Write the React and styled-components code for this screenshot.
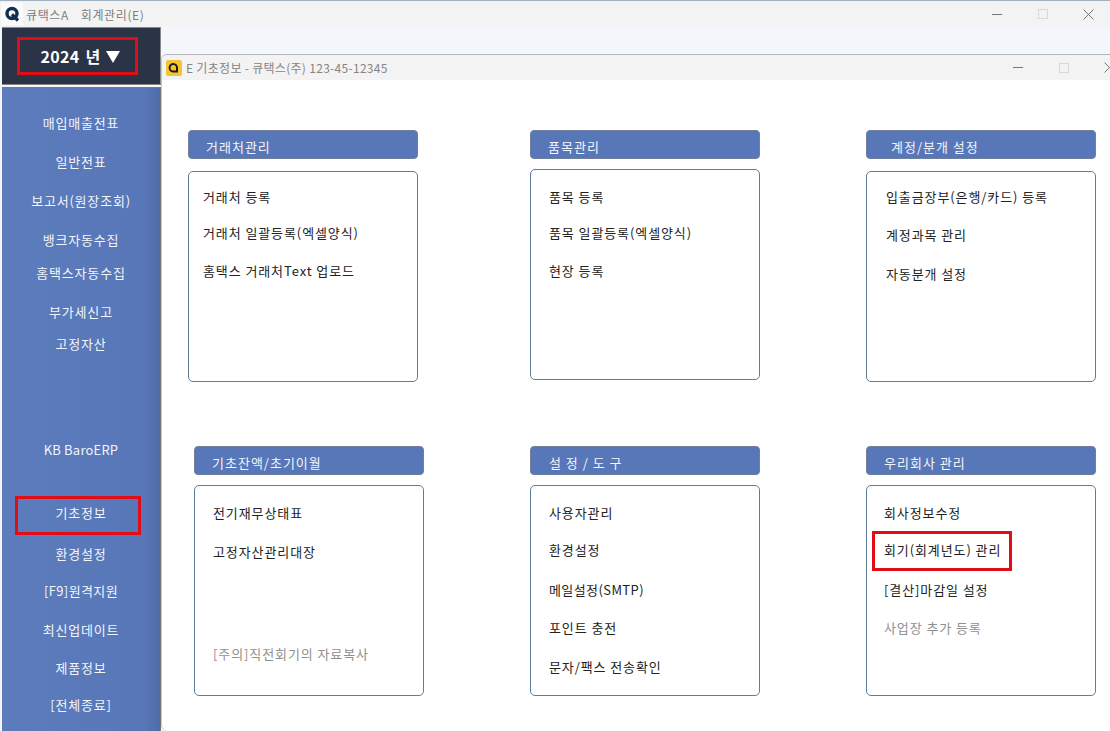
import styled, {createGlobalStyle} from "styled-components";

const GlobalStyle = createGlobalStyle`
    html, body {
        margin: 0;
        padding: 0;
        width: 1110px;
        height: 731px;
        overflow: hidden;
        background: #f3f6fa;
    }
    * {
        box-sizing: border-box;
    }
`;

const Page = styled.div`
    width: 1110px;
    height: 731px;
    overflow: hidden;
    font-family: "Noto Sans CJK KR", "Noto Sans", sans-serif;
    font-size: 13px;
    display: flex;
    flex-direction: column;
`;

const TitleBar = styled.div`
    height: 27px;
    flex: none;
    display: flex;
    align-items: center;
    background: #f3f3f3;
    border-top: 1px solid #9fb0c0;
    color: #7d7d7d;
    font-size: 12px;
    letter-spacing: 0.6px;
`;

const AppLogo = styled.div`
    width: 22px;
    height: 22px;
    margin-left: 1px;
    display: flex;
    align-items: center;
    justify-content: center;
    background: #fbfbfb;
`;

const TitleText = styled.span`
    margin-left: ${({gap}) => gap}px;
    white-space: nowrap;
`;

const WindowButtons = styled.div`
    margin-left: auto;
    display: flex;
    align-items: center;
    gap: ${({gap}) => gap}px;
    margin-right: ${({right}) => right}px;
    color: #777;
`;

const Body = styled.div`
    flex: 1;
    display: flex;
    min-height: 0;
`;

const Sidebar = styled.div`
    width: 161px;
    flex: none;
    display: flex;
    flex-direction: column;
    padding-left: 2px;
    background: #f3f6fa;
`;

const YearBox = styled.div`
    height: 58px;
    flex: none;
    display: flex;
    align-items: center;
    padding-left: 15px;
    background: #2b3347;
    border: 1px solid #888;
    border-left: 0;
`;

const YearLabel = styled.div`
    width: 121px;
    height: 38px;
    display: flex;
    align-items: center;
    justify-content: center;
    gap: 5px;
    border: 3px solid #e00d16;
    color: #fff;
    font-size: 16px;
    font-weight: 700;
    letter-spacing: 0.3px;
    word-spacing: 2px;
    padding-left: 6px;
`;

const Triangle = styled.span`
    width: 0;
    height: 0;
    margin-left: 1px;
    margin-top: 2px;
    border-left: 7px solid transparent;
    border-right: 7px solid transparent;
    border-top: 12px solid #fff;
`;

const Menu = styled.div`
    flex: 1;
    margin-top: 2px;
    display: flex;
    flex-direction: column;
    align-items: center;
    background: linear-gradient(to right, #5c7cbc 0, #5877b8 90%, #4f6ca8 100%);
    border-top: 1px solid #777;
    border-right: 1px solid #777;
`;

const MenuItem = styled.div`
    margin-top: ${({top}) => top}px;
    height: ${({marked}) => (marked ? "39px" : "20px")};
    width: ${({marked}) => (marked ? "126px" : "auto")};
    display: flex;
    align-items: center;
    justify-content: center;
    color: #f2f5fb;
    font-size: 13px;
    letter-spacing: ${({spacing}) => spacing ?? 0.8}px;
    white-space: nowrap;
    border: ${({marked}) => (marked ? "3px solid #e00d16" : "0")};
    padding-bottom: ${({marked}) => (marked ? "6px" : "0")};
    padding-left: ${({marked}) => (marked ? "6px" : "0")};
    margin-left: ${({marked}) => (marked ? "-6px" : "0")};
`;

const ChildWindow = styled.div`
    flex: 1;
    margin-top: 27px;
    display: flex;
    flex-direction: column;
    background: #fff;
    border-top: 1px solid #b5b5b5;
    border-left: 1px solid #c8c8c8;
    border-radius: 6px 0 0 6px;
    min-width: 0;
    overflow: hidden;
`;

const ChildTitle = styled.div`
    height: 25px;
    flex: none;
    display: flex;
    align-items: center;
    background: #f3f3f3;
    color: #858585;
    font-size: 12px;
    letter-spacing: 0.3px;
`;

const ChildLogo = styled.div`
    width: 16px;
    height: 16px;
    margin-left: 4px;
    display: flex;
    align-items: center;
    justify-content: center;
    background: #f5c431;
    border-radius: 2px;
`;

const Panels = styled.div`
    display: grid;
    grid-template-columns: 342px 336px 230px;
    grid-template-rows: 252px 250px;
    padding-top: 50px;
    padding-left: 26px;
    row-gap: 64px;
    justify-content: start;
`;

const Panel = styled.div`
    margin-left: ${({shift}) => shift || 0}px;
    width: 230px;
    display: flex;
    flex-direction: column;
`;

const PanelTitle = styled.div`
    height: 29px;
    flex: none;
    display: flex;
    align-items: center;
    padding-left: ${({indent}) => indent}px;
    background: #5877b8;
    border: 1px solid #6f7f9b;
    border-radius: 4px;
    color: #f2f5fb;
    font-size: 13px;
    letter-spacing: 1px;
    padding-top: 4px;
`;

const PanelBox = styled.div`
    margin-top: ${({top}) => top}px;
    height: ${({height}) => height}px;
    display: flex;
    flex-direction: column;
    border: 1px solid #5f7d96;
    border-radius: 5px;
    padding-left: ${({indent}) => indent}px;
`;

const Entry = styled.div`
    margin-top: ${({top}) => top}px;
    height: 20px;
    display: flex;
    align-items: center;
    color: ${({muted}) => (muted ? "#8f8f8f" : "#222")};
    font-size: 13px;
    letter-spacing: ${({spacing}) => spacing ?? 0.9}px;
    white-space: nowrap;
`;

const MarkedEntry = styled(Entry)`
    margin-left: -12px;
    width: 140px;
    height: 40px;
    padding-left: 9px;
    padding-bottom: 3px;
    border: 3px solid #e00d16;
`;

const leftMenu = [
    {label: "매입매출전표", top: 24},
    {label: "일반전표", top: 19},
    {label: "보고서(원장조회)", top: 19},
    {label: "뱅크자동수집", top: 19},
    {label: "홈택스자동수집", top: 13},
    {label: "부가세신고", top: 19},
    {label: "고정자산", top: 12},
    {label: "KB BaroERP", top: 86, spacing: 0.2},
    {label: "기초정보", top: 37, marked: true},
    {label: "환경설정", top: 8},
    {label: "[F9]원격지원", top: 17, spacing: 0.4},
    {label: "최신업데이트", top: 19},
    {label: "제품정보", top: 18},
    {label: "[전체종료]", top: 17},
];

const panels = [
    {
        title: "거래처관리", indent: 17, boxTop: 12, boxHeight: 211, pad: 14,
        items: [
            {label: "거래처 등록", top: 14},
            {label: "거래처 일괄등록(엑셀양식)", top: 16},
            {label: "홈택스 거래처Text 업로드", top: 18},
        ],
    },
    {
        title: "품목관리", indent: 17, boxTop: 10, boxHeight: 211, pad: 18,
        items: [
            {label: "품목 등록", top: 16},
            {label: "품목 일괄등록(엑셀양식)", top: 16},
            {label: "현장 등록", top: 18},
        ],
    },
    {
        title: "계정/분개 설정", indent: 24, boxTop: 12, boxHeight: 211, pad: 19,
        items: [
            {label: "입출금장부(은행/카드) 등록", top: 14},
            {label: "계정과목 관리", top: 18},
            {label: "자동분개 설정", top: 19},
        ],
    },
    {
        title: "기초잔액/초기이월", indent: 17, boxTop: 10, boxHeight: 211, pad: 18, shift: 6,
        items: [
            {label: "전기재무상태표", top: 16},
            {label: "고정자산관리대장", top: 19},
            {label: "[주의]직전회기의 자료복사", top: 82, muted: true},
        ],
    },
    {
        title: "설 정 / 도 구", indent: 18, boxTop: 10, boxHeight: 211, pad: 18,
        items: [
            {label: "사용자관리", top: 16},
            {label: "환경설정", top: 17},
            {label: "메일설정(SMTP)", top: 20, spacing: 0.4},
            {label: "포인트 충전", top: 18},
            {label: "문자/팩스 전송확인", top: 19},
        ],
    },
    {
        title: "우리회사 관리", indent: 17, boxTop: 10, boxHeight: 211, pad: 17,
        items: [
            {label: "회사정보수정", top: 16},
            {label: "회기(회계년도) 관리", top: 9, marked: true},
            {label: "[결산]마감일 설정", top: 8},
            {label: "사업장 추가 등록", top: 18, muted: true},
        ],
    },
];

const WindowControls = ({gap, right}) => (
    <WindowButtons gap={gap} right={right}>
        <svg width="11" height="11" viewBox="0 0 11 11"><path d="M0 5.5h10" stroke="#777" strokeWidth="1" /></svg>
        <svg width="10" height="10" viewBox="0 0 10 10"><rect x="0.5" y="0.5" width="9" height="9" fill="none" stroke="#d8d8d8" /></svg>
        <svg width="11" height="11" viewBox="0 0 11 11"><path d="M0.5 0.5l10 10M10.5 0.5l-10 10" stroke="#777" strokeWidth="1" /></svg>
    </WindowButtons>
);

const App = () => {
    return (
        <Page>
            <GlobalStyle />
            <TitleBar>
                <AppLogo>
                    <svg width="16" height="16" viewBox="0 0 16 16">
                        <circle cx="8" cy="7.5" r="5" fill="none" stroke="#0f2f50" strokeWidth="3.4" />
                        <path d="M8 8.5l6 6" stroke="#0f2f50" strokeWidth="3.2" />
                    </svg>
                </AppLogo>
                <TitleText gap={3}>큐택스A</TitleText>
                <TitleText gap={12}>회계관리(E)</TitleText>
                <WindowControls gap={35} right={16} />
            </TitleBar>
            <Body>
                <Sidebar>
                    <YearBox>
                        <YearLabel>2024 년 <Triangle /></YearLabel>
                    </YearBox>
                    <Menu>
                        {leftMenu.map((item) => (
                            <MenuItem key={item.label} top={item.top} marked={item.marked} spacing={item.spacing}>{item.label}</MenuItem>
                        ))}
                    </Menu>
                </Sidebar>
                <ChildWindow>
                    <ChildTitle>
                        <ChildLogo>
                            <svg width="12" height="12" viewBox="0 0 12 12">
                                <path d="M10 9.5H5a3.7 3.7 0 1 1 4-3.7V9.5" fill="none" stroke="#1d1d1d" strokeWidth="2" />
                            </svg>
                        </ChildLogo>
                        <TitleText gap={4}>E 기초정보 - 큐택스(주) 123-45-12345</TitleText>
                        <WindowControls gap={35} right={-5} />
                    </ChildTitle>
                    <Panels>
                        {panels.map((panel) => (
                            <Panel key={panel.title} shift={panel.shift}>
                                <PanelTitle indent={panel.indent}>{panel.title}</PanelTitle>
                                <PanelBox top={panel.boxTop} height={panel.boxHeight} indent={panel.pad}>
                                    {panel.items.map((item) => (
                                        item.marked
                                            ? <MarkedEntry key={item.label} top={item.top}>{item.label}</MarkedEntry>
                                            : <Entry key={item.label} top={item.top} muted={item.muted} spacing={item.spacing}>{item.label}</Entry>
                                    ))}
                                </PanelBox>
                            </Panel>
                        ))}
                    </Panels>
                </ChildWindow>
            </Body>
        </Page>
    );
};

export default App;
